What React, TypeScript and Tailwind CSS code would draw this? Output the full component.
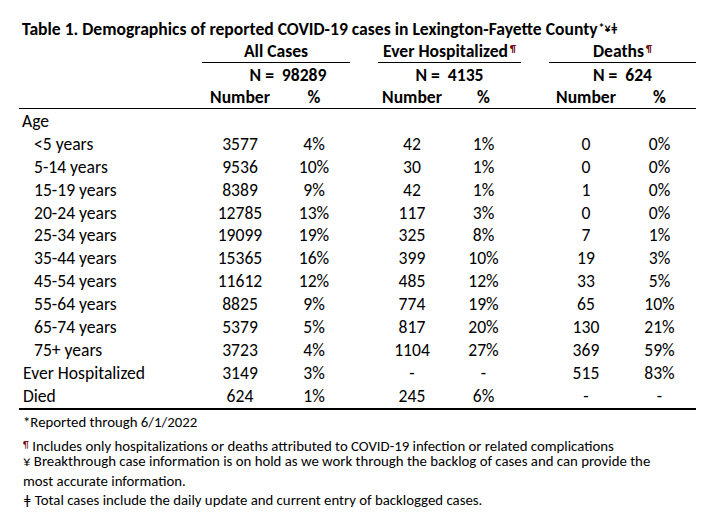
import React from "react";

const GRID = "grid grid-cols-[183px_76px_72px_28px_68px_75px_28px_74px_73px]";

type DataRow = [string, string, string, string, string, string, string];

const ageRows: DataRow[] = [
  ["<5 years", "3577", "4%", "42", "1%", "0", "0%"],
  ["5-14 years", "9536", "10%", "30", "1%", "0", "0%"],
  ["15-19 years", "8389", "9%", "42", "1%", "1", "0%"],
  ["20-24 years", "12785", "13%", "117", "3%", "0", "0%"],
  ["25-34 years", "19099", "19%", "325", "8%", "7", "1%"],
  ["35-44 years", "15365", "16%", "399", "10%", "19", "3%"],
  ["45-54 years", "11612", "12%", "485", "12%", "33", "5%"],
  ["55-64 years", "8825", "9%", "774", "19%", "65", "10%"],
  ["65-74 years", "5379", "5%", "817", "20%", "130", "21%"],
  ["75+ years", "3723", "4%", "1104", "27%", "369", "59%"],
];

const totalRows: DataRow[] = [
  ["Ever Hospitalized", "3149", "3%", "-", "-", "515", "83%"],
  ["Died", "624", "1%", "245", "6%", "-", "-"],
];

const Pilcrow = () => (
  <sup className="text-[10px] text-[#6e0a0a] relative top-[-5px] ml-[2px]">¶</sup>
);

const Row: React.FC<{ row: DataRow; indent?: boolean }> = ({ row, indent = false }) => {
  const [label, a, ap, b, bp, c, cp] = row;
  return (
    <div className={`${GRID} h-[22.9px] leading-[22.9px]`}>
      <div className={indent ? "pl-[15px] whitespace-nowrap" : "pl-[4px] whitespace-nowrap"}>{label}</div>
      <div className="text-center">{a}</div>
      <div className="text-center">{ap}</div>
      <div />
      <div className="text-center">{b}</div>
      <div className="text-center">{bp}</div>
      <div />
      <div className="text-center">{c}</div>
      <div className="text-center">{cp}</div>
    </div>
  );
};

export default function App() {
  return (
    <div
      className="w-[718px] h-[523px] bg-white text-black pl-[19px] pt-[18px] text-[17.6px] overflow-hidden"
      style={{ fontFamily: "Calibri, Carlito, Lato, sans-serif" }}
    >
      <div className="h-[23px] leading-[23px] pl-[3px] font-bold whitespace-nowrap">
        Table 1. Demographics of reported COVID-19 cases in Lexington-Fayette County
        <sup className="text-[12px] relative top-[-3px] ml-[1px]">*¥ǂ</sup>
      </div>

      <div className="w-[677px] font-bold">
        <div className={`${GRID} h-[22px] leading-[21px]`}>
          <div />
          <div className="col-span-2 text-center border-b border-black">All Cases</div>
          <div />
          <div className="col-span-2 text-center border-b border-black whitespace-nowrap">
            Ever Hospitalized
            <Pilcrow />
          </div>
          <div />
          <div className="col-span-2 text-center border-b border-black">
            Deaths
            <Pilcrow />
          </div>
        </div>

        <div className={`${GRID} h-[24px] leading-[24px]`}>
          <div />
          <div className="col-span-2 text-center pl-[24px] whitespace-pre">N =  98289</div>
          <div />
          <div className="col-span-2 text-center whitespace-pre">N =  4135</div>
          <div />
          <div className="col-span-2 text-center whitespace-pre">N =  624</div>
        </div>

        <div className={`${GRID} h-[22px] leading-[21px] border-b border-black`}>
          <div />
          <div className="text-center">Number</div>
          <div className="text-center">%</div>
          <div />
          <div className="text-center">Number</div>
          <div className="text-center">%</div>
          <div />
          <div className="text-center">Number</div>
          <div className="text-center">%</div>
        </div>
      </div>

      <div className="w-[677px] pt-[1px] border-b-2 border-black">
        <div className="h-[22.9px] leading-[22.9px] pl-[3px]">Age</div>
        {ageRows.map((r) => (
          <Row key={r[0]} row={r} indent />
        ))}
        {totalRows.map((r) => (
          <Row key={r[0]} row={r} />
        ))}
      </div>

      <div className="pl-[4px] text-[14.8px] whitespace-nowrap">
        <div className="h-[14px] leading-[14px] mt-[5px]">*Reported through 6/1/2022</div>
        <div className="h-[14px] leading-[14px] mt-[10px]">
          <sup className="text-[10px] text-[#6e0a0a] relative top-[-3px]">¶</sup> Includes only
          hospitalizations or deaths attributed to COVID-19 infection or related complications
        </div>
        <div className="h-[14px] leading-[14px] mt-[1px]">
          ¥ Breakthrough case information is on hold as we work through the backlog of cases and can provide the
        </div>
        <div className="h-[14px] leading-[14px] mt-[6px]">most accurate information.</div>
        <div className="h-[14px] leading-[14px] mt-[5px]">
          ǂ Total cases include the daily update and current entry of backlogged cases.
        </div>
      </div>
    </div>
  );
}
